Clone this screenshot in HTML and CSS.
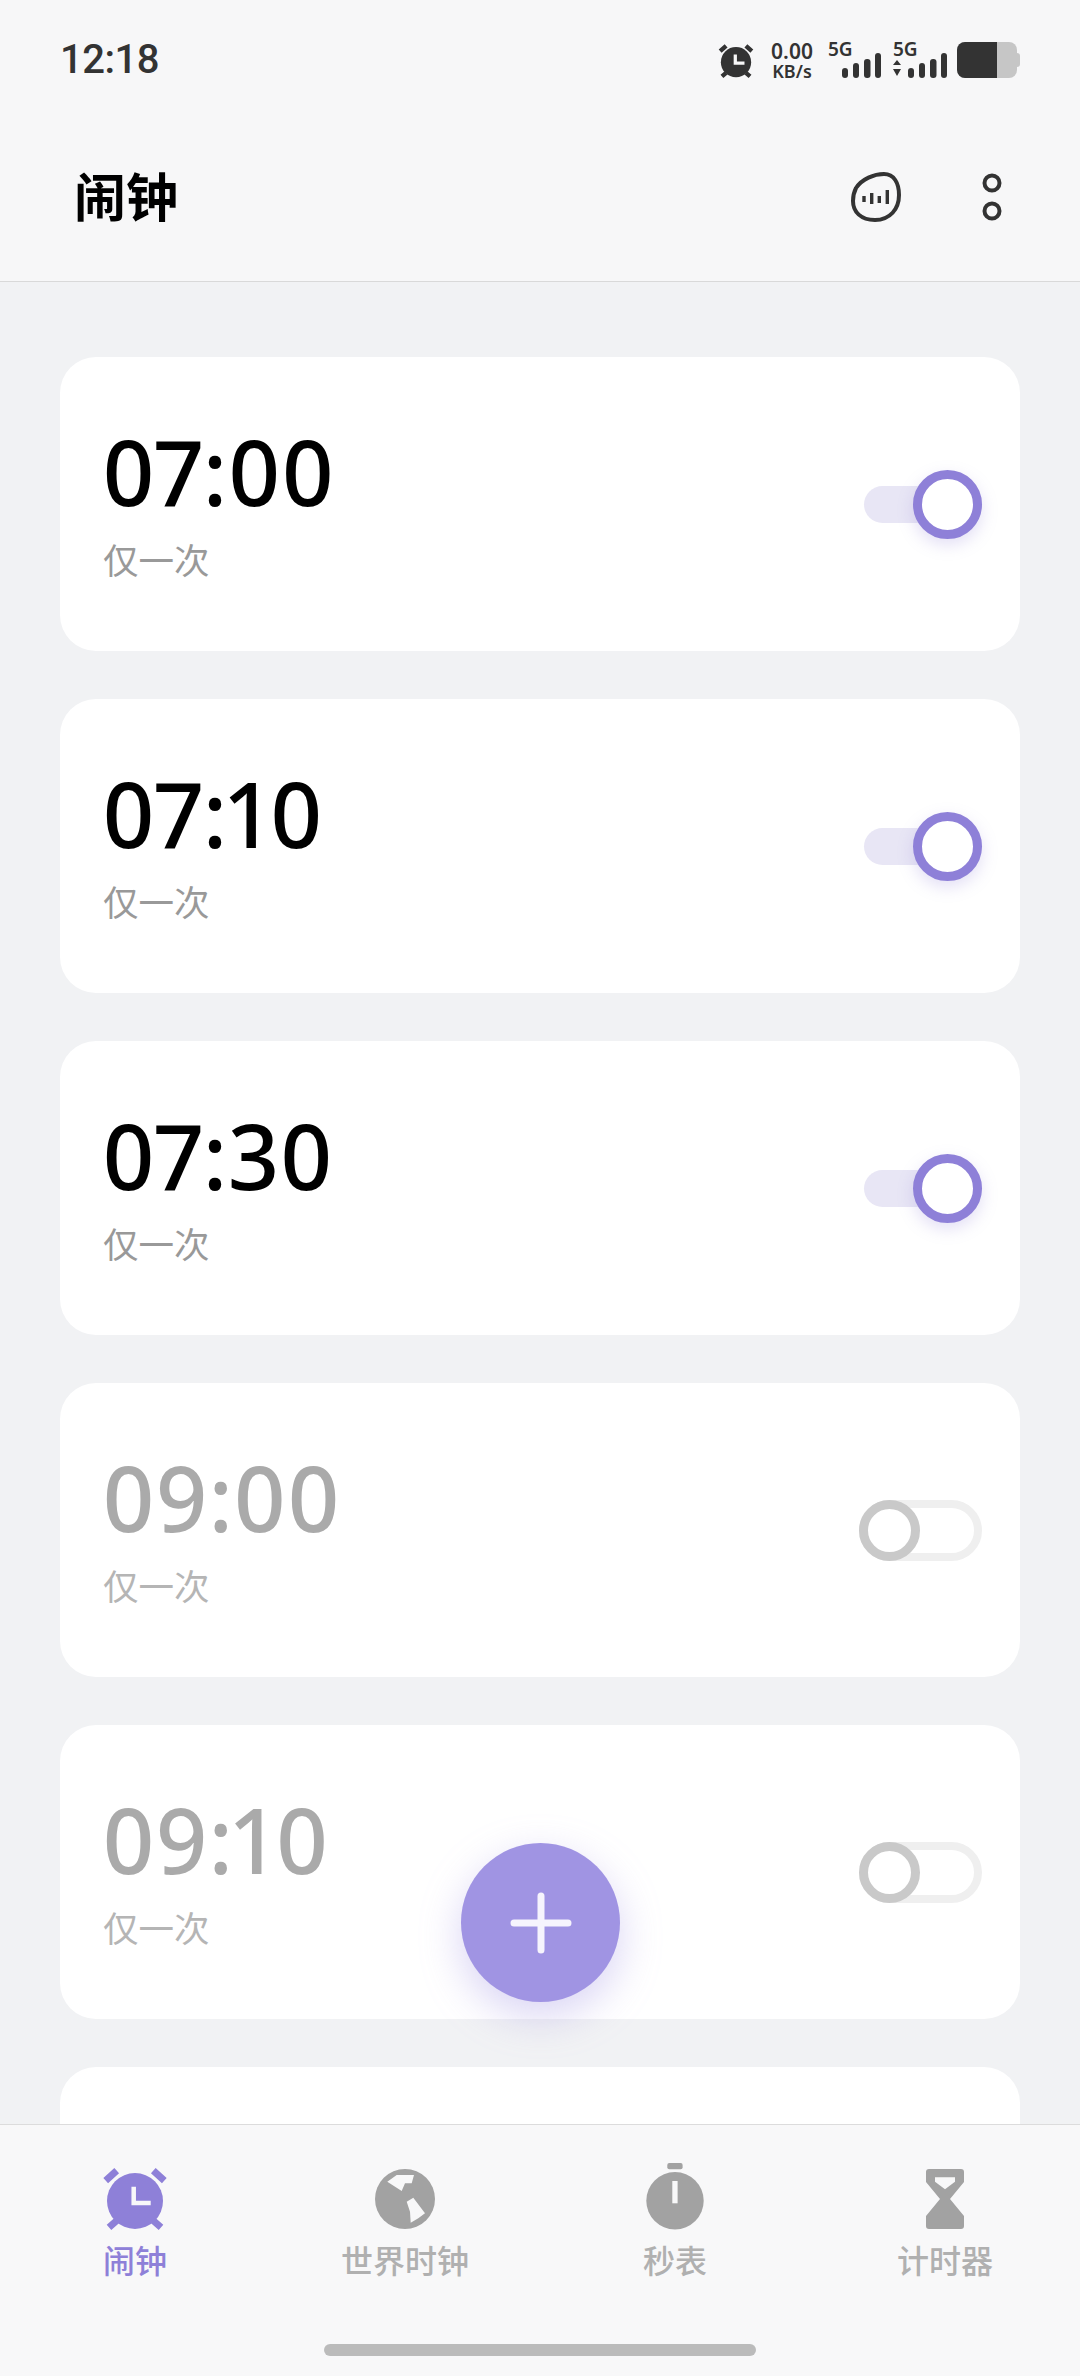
FILE: index.html
```html
<!DOCTYPE html>
<html lang="zh-CN">

<head>
    <meta charset="UTF-8">
    <meta name="viewport" content="width=device-width, initial-scale=1.0">
    <title>闹钟</title>
    <link rel="stylesheet" href="styles.css">
</head>

<body>
    <div class="phone">

        <header class="topbar">
            <div class="status">
                <span class="clock">12:18</span>
                <div class="status-icons">
                    <svg class="st-alarm" viewBox="0 0 70 74" fill="#333">
                        <circle cx="35" cy="41" r="28" />
                        <path d="M5.7 20.7 16.7 10.7M64.3 20.7 53.3 10.7M9 67.3 16.7 60.7M61 67.3 53.3 60.7" stroke="#333" stroke-width="8" fill="none" />
                        <path d="M33.7 26.7V43H50.7" stroke="#f7f7f8" stroke-width="6" fill="none" />
                    </svg>
                    <div class="speed">
                        <span class="speed-num">0.00</span>
                        <span class="speed-unit">KB/s</span>
                    </div>
                    <div class="net net-a">
                        <span class="net-label">5G</span>
                        <svg class="bars" viewBox="0 0 39 25" fill="#333">
                            <rect x="0" y="15" width="6" height="10" rx="3" />
                            <rect x="11" y="10" width="6" height="15" rx="3" />
                            <rect x="22" y="6" width="6.5" height="19" rx="3" />
                            <rect x="33" y="0" width="6" height="25" rx="3" />
                        </svg>
                    </div>
                    <div class="net net-b">
                        <span class="net-label">5G</span>
                        <svg class="bars-arrows" viewBox="0 0 54 25" fill="#333">
                            <path d="M4 7 8 12H0ZM4 23 0 16H8Z" />
                            <rect x="15" y="15" width="6" height="10" rx="3" />
                            <rect x="26" y="10" width="6" height="15" rx="3" />
                            <rect x="37" y="6" width="6.5" height="19" rx="3" />
                            <rect x="48" y="0" width="6" height="25" rx="3" />
                        </svg>
                    </div>
                    <div class="battery">
                        <div class="battery-fill"></div>
                    </div>
                </div>
            </div>
            <div class="titlebar">
                <h1>闹钟</h1>
                <div class="actions">
                    <svg class="act-blob" viewBox="0 0 50 50" fill="none" stroke="#333">
                        <path d="M5 16C11 7 23 2 33 2C43 2 48 11 48 23C48 37 39 48 24 48C10 48 2 40 2 29C2 24 3 20 5 16Z" stroke-width="4" />
                        <path d="M13 24V30M20.7 21V32M28.3 24V31M36.3 18V32" stroke-width="3.4" />
                    </svg>
                    <svg class="act-more" viewBox="0 0 20 48" fill="none" stroke="#333" stroke-width="4">
                        <circle cx="10" cy="10" r="7.5" />
                        <circle cx="10" cy="38" r="7.5" />
                    </svg>
                </div>
            </div>
        </header>

        <main class="list">
            <div class="card">
                <div>
                    <div class="time">07:00</div>
                    <div class="repeat">仅一次</div>
                </div>
                <div class="toggle on"><span class="knob"></span></div>
            </div>
            <div class="card">
                <div>
                    <div class="time">07:10</div>
                    <div class="repeat">仅一次</div>
                </div>
                <div class="toggle on"><span class="knob"></span></div>
            </div>
            <div class="card">
                <div>
                    <div class="time">07:30</div>
                    <div class="repeat">仅一次</div>
                </div>
                <div class="toggle on"><span class="knob"></span></div>
            </div>
            <div class="card off">
                <div>
                    <div class="time">09:00</div>
                    <div class="repeat">仅一次</div>
                </div>
                <div class="toggle"><span class="knob"></span></div>
            </div>
            <div class="card off">
                <div>
                    <div class="time">09:10</div>
                    <div class="repeat">仅一次</div>
                </div>
                <div class="toggle"><span class="knob"></span></div>
            </div>
            <div class="card off"></div>
        </main>

        <div class="fab">
            <svg viewBox="0 0 54 54" class="fab-plus">
                <path d="M27 0V54M0 27H54" stroke="#f6f4fd" stroke-width="7" stroke-linecap="round" />
            </svg>
        </div>

        <nav class="tabs">
            <div class="tab active">
                <svg viewBox="0 0 70 74" fill="#8e80d8">
                    <circle cx="35" cy="41" r="28" />
                    <path d="M5.7 20.7 16.7 10.7M64.3 20.7 53.3 10.7M9 67.3 16.7 60.7M61 67.3 53.3 60.7" stroke="#8e80d8" stroke-width="7" fill="none" />
                    <path d="M33.7 26.7V43H50.7" stroke="#f8f8f9" stroke-width="4.5" fill="none" />
                </svg>
                <span>闹钟</span>
            </div>
            <div class="tab">
                <svg viewBox="0 0 70 74" fill="#a2a2a2">
                    <circle cx="35" cy="39" r="30" />
                    <path fill="#f8f8f9" d="M17.3 21.7 26.7 15H44L41.7 23.3H35L31.7 31Z" />
                    <path fill="#f8f8f9" d="M36.7 41.7 43.3 37.7 55 53.3 48.3 58.3 40.7 62.7 40 51.7Z" />
                </svg>
                <span>世界时钟</span>
            </div>
            <div class="tab">
                <svg viewBox="0 0 70 74" fill="#a2a2a2">
                    <circle cx="35" cy="40.7" r="28.7" />
                    <rect x="27.3" y="3" width="15.3" height="6.3" rx="2" />
                    <rect x="32.3" y="21" width="5.3" height="22.3" fill="#f8f8f9" />
                </svg>
                <span>秒表</span>
            </div>
            <div class="tab">
                <svg viewBox="0 0 70 74" fill="#a2a2a2">
                    <path d="M19 9H51Q54 9 54 12V22L40 39 54 56V66Q54 69 51 69H19Q16 69 16 66V56L30 39 16 22V12Q16 9 19 9Z" />
                    <path fill="#f8f8f9" d="M25 17.3H45V21.7L35 29.3 25 21.7Z" />
                </svg>
                <span>计时器</span>
            </div>
            <div class="home-bar"></div>
        </nav>

    </div>
</body>

</html>
```

FILE: styles.css
```css
* {
    box-sizing: border-box;
}

body {
    margin: 0;
    font-family: "Noto Sans", "Noto Sans CJK SC", sans-serif;
}

.phone {
    position: relative;
    width: 1080px;
    height: 2376px;
    display: flex;
    flex-direction: column;
    overflow: hidden;
    background-color: #f1f2f4;
}

/* top area */
.topbar {
    height: 282px;
    flex-shrink: 0;
    background-color: #f7f7f8;
    border-bottom: 1px solid #d9d9d9;
}

.status {
    height: 120px;
    padding: 0 60px;
    display: flex;
    align-items: center;
    justify-content: space-between;
    color: #333;
}

.clock {
    font-family: Roboto, sans-serif;
    font-size: 40px;
    font-weight: 500;
    line-height: 40px;
    letter-spacing: -0.5px;
}

.status-icons {
    display: flex;
    align-items: center;
}

.st-alarm {
    width: 38px;
    height: 40px;
    margin-right: 12px;
}

.speed {
    width: 50px;
    display: flex;
    flex-direction: column;
    align-items: center;
    font-weight: 600;
    margin-right: 11px;
}

.speed-num {
    font-size: 21px;
    line-height: 21px;
}

.speed-unit {
    font-size: 18px;
    line-height: 18px;
}

.net {
    height: 36px;
    display: flex;
    flex-direction: column;
}

.net-a {
    width: 53px;
    margin-right: 12px;
}

.net-b {
    width: 54px;
    margin-right: 10px;
}

.net-label {
    font-size: 19px;
    font-weight: 600;
    line-height: 14px;
    margin-bottom: -3px;
}

.bars {
    width: 39px;
    height: 25px;
    margin-left: 14px;
}

.bars-arrows {
    width: 54px;
    height: 25px;
}

.battery {
    position: relative;
    width: 60px;
    height: 36px;
    margin-right: 3px;
    border-radius: 8px;
    background-color: #c6c6c6;
}

.battery::after {
    content: "";
    position: absolute;
    right: -3px;
    top: 11px;
    width: 3px;
    height: 14px;
    border-radius: 0 3px 3px 0;
    background-color: #c6c6c6;
}

.battery-fill {
    width: 40px;
    height: 36px;
    border-radius: 8px 0 0 8px;
    background-color: #333;
}

.titlebar {
    height: 154px;
    padding: 0 78px 0 74px;
    display: flex;
    align-items: center;
    justify-content: space-between;
}

.titlebar h1 {
    margin: 0;
    font-size: 52px;
    font-weight: 700;
    color: #000;
    line-height: 60px;
}

.actions {
    display: flex;
    align-items: center;
    gap: 81px;
}

.act-blob {
    width: 50px;
    height: 50px;
}

.act-more {
    width: 20px;
    height: 48px;
}

/* alarm list */
.list {
    flex: 1;
    min-height: 0;
    overflow: hidden;
    padding: 75px 60px 0;
    display: flex;
    flex-direction: column;
    gap: 48px;
}

.card {
    flex: 0 0 294px;
    padding: 0 38px 4px 42px;
    background-color: #fff;
    border-radius: 36px;
    display: flex;
    align-items: center;
    justify-content: space-between;
}

.time {
    font-size: 90px;
    font-weight: 500;
    line-height: 100px;
    letter-spacing: 0.5px;
    color: #000;
    font-variant-numeric: proportional-nums;
}

.repeat {
    margin-top: 16px;
    margin-left: 1px;
    font-size: 35.5px;
    line-height: 46px;
    color: #999;
}

.card.off .time {
    color: #aaa;
}

.card.off .repeat {
    color: #b5b5b5;
}

/* switches */
.toggle {
    position: relative;
    width: 123px;
    height: 61px;
    margin-top: 4px;
    border: 8px solid #efefef;
    border-radius: 31px;
}

.toggle .knob {
    position: absolute;
    left: -8px;
    top: -8px;
    width: 61px;
    height: 61px;
    background-color: #fff;
    border: 9px solid #c9c9c9;
    border-radius: 50%;
}

.toggle.on {
    width: 118px;
    height: 37px;
    border: none;
    border-radius: 19px;
    background-color: #e8e6f5;
}

.toggle.on .knob {
    left: 49px;
    top: -16px;
    width: 69px;
    height: 69px;
    border-color: #8e80d8;
    box-shadow: 0 6px 16px rgba(142, 128, 216, 0.25);
}

/* add button */
.fab {
    position: absolute;
    left: 461px;
    top: 1843px;
    width: 159px;
    height: 159px;
    border-radius: 50%;
    background-color: #a094e3;
    box-shadow: 0 14px 40px rgba(160, 148, 227, 0.4);
    display: flex;
    align-items: center;
    justify-content: center;
}

.fab-plus {
    width: 54px;
    height: 54px;
    overflow: visible;
}

/* bottom tabs */
.tabs {
    position: relative;
    height: 252px;
    flex-shrink: 0;
    padding-top: 35px;
    display: grid;
    grid-template-columns: repeat(4, 270px);
    background-color: #f8f8f9;
    border-top: 1px solid #dcdcdc;
}

.tab {
    display: flex;
    flex-direction: column;
    align-items: center;
    font-size: 32px;
    font-weight: 500;
    line-height: 44px;
    color: #b0b0b0;
}

.tab svg {
    width: 70px;
    height: 74px;
    margin-bottom: 5px;
}

.tab.active {
    color: #8e80d8;
}

.home-bar {
    position: absolute;
    left: 324px;
    top: 219px;
    width: 432px;
    height: 12px;
    border-radius: 6px;
    background-color: #bbb;
}
```
